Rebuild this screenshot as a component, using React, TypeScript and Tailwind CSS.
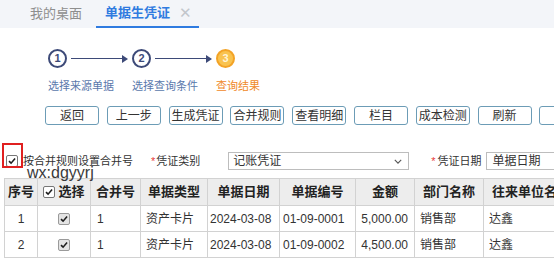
/*
 * 单据生凭证 — query result step with merge options and voucher list.
 */

const steps = [
  { n: "1", label: "选择来源单据" },
  { n: "2", label: "选择查询条件" },
  { n: "3", label: "查询结果" },
];

const buttons = ["返回", "上一步", "生成凭证", "合并规则", "查看明细", "栏目", "成本检测", "刷新", ""];

const rows = [
  { no: "1", merge: "1", type: "资产卡片", date: "2024-03-08", code: "01-09-0001", amount: "5,000.00", dept: "销售部", unit: "达鑫" },
  { no: "2", merge: "1", type: "资产卡片", date: "2024-03-08", code: "01-09-0002", amount: "4,500.00", dept: "销售部", unit: "达鑫" },
];

function Check({ gray }: { gray?: boolean }) {
  return (
    <span
      className={`inline-flex h-[12px] w-[12px] shrink-0 items-center justify-center rounded-[2px] border ${
        gray ? "border-[#9a9a9a] bg-[#e4e4e4]" : "border-[#777] bg-white"
      }`}
    >
      <svg viewBox="0 0 12 12" className="h-[10px] w-[10px]">
        <path d="M2.4 6.1 L4.9 8.6 L9.7 3.1" fill="none" stroke="#1e1e1e" strokeWidth="1.9" />
      </svg>
    </span>
  );
}

function Arrow() {
  return (
    <div className="mx-[4px] flex w-[57px] items-center">
      <div className="h-px flex-1 bg-[#3d4a78]" />
      <svg viewBox="0 0 6 8" className="h-[8px] w-[6px]">
        <path d="M0 0 L6 4 L0 8 Z" fill="#3d4a78" />
      </svg>
    </div>
  );
}

export default function App() {
  return (
    <div className="relative h-[258px] w-[554px] overflow-hidden bg-white font-['Liberation_Sans','Noto_Sans_CJK_SC',sans-serif]">
      {/* tab strip */}
      <div className="flex h-[28px] items-stretch bg-[#f3f5f9] pl-[30px]">
        <div className="flex items-center pb-[1px] text-[13px] text-[#8e8e8e]">我的桌面</div>
        <div className="ml-[14px] flex w-[103px] items-center border-b-[2px] border-[#2f7be0] pl-[9px] text-[13px] font-bold text-[#2f7be0]">
          单据生凭证
          <span className="ml-[9px] text-[15px] font-normal text-[#c2c6cc]">✕</span>
        </div>
      </div>

      {/* steps */}
      <div className="flex pl-[48px] pt-[21px]">
        {steps.map((s, i) => {
          const active = i === 2;
          return (
            <div key={s.n} className="flex flex-col">
              <div className="flex items-center">
                <div
                  className={`flex h-[19px] w-[19px] items-center justify-center rounded-full border-2 text-[11px] font-bold ${
                    active ? "border-[#f3a326] bg-[#f9c34f] text-[#fff3d6]" : "border-[#3d4a78] bg-white text-[#3d4a78]"
                  }`}
                >
                  {s.n}
                </div>
                {!active && <Arrow />}
              </div>
              <div className={`mt-[11px] text-[11px] leading-[14px] ${active ? "text-[#f0892a]" : "text-[#5a78ac]"}`}>
                {s.label}
              </div>
            </div>
          );
        })}
      </div>

      {/* toolbar */}
      <div className="mt-[13px] flex gap-[7.8px] pl-[45px]">
        {buttons.map((b, i) => (
          <div
            key={i}
            className="flex h-[19px] w-[54px] shrink-0 items-center justify-center rounded-[3px] border border-[#6c9cb6] bg-white text-[12px] text-[#333]"
          >
            {b}
          </div>
        ))}
      </div>

      {/* options */}
      <div className="mt-[27px] flex h-[18px] items-center whitespace-nowrap text-[11px] text-[#333] [&>*]:shrink-0">
        <div className="ml-[6px] flex">
          <Check />
        </div>
        <span className="ml-[5px]">按合并规则设置合并号</span>
        <span className="ml-[18px] text-[#e83b3b]">*</span>
        <span className="ml-[1px]">凭证类别</span>
        <div className="ml-[28px] flex h-[18px] w-[181px] items-center justify-between border border-[#bdbdbd] pl-[4px] pr-[6px] text-[12px]">
          <span>记账凭证</span>
          <svg viewBox="0 0 10 6" className="h-[5px] w-[8px]">
            <path d="M1 1 L5 5 L9 1" fill="none" stroke="#555" strokeWidth="1.4" />
          </svg>
        </div>
        <span className="ml-[22px] text-[#e83b3b]">*</span>
        <span className="ml-[2px]">凭证日期</span>
        <div className="ml-[4px] flex h-[18px] w-[90px] items-center border border-[#bdbdbd] pl-[6px] text-[12px]">
          单据日期
        </div>
      </div>

      {/* table */}
      <div className="ml-[4px] mt-[8px]">
        <table className="w-[600px] table-fixed border-collapse text-[12px] text-[#333]">
          <colgroup>
            <col className="w-[33px]" />
            <col className="w-[53px]" />
            <col className="w-[50px]" />
            <col className="w-[67px]" />
            <col className="w-[72px]" />
            <col className="w-[76px]" />
            <col className="w-[59px]" />
            <col className="w-[69px]" />
            <col className="w-[121px]" />
          </colgroup>
          <thead>
            <tr className="h-[27px] bg-[#ededed] text-[13px] font-bold text-[#222]">
              <th className="border border-[#d2d2d2]">序号</th>
              <th className="border border-[#d2d2d2]">
                <span className="inline-flex items-center gap-[3px]">
                  <Check />
                  选择
                </span>
              </th>
              <th className="border border-[#d2d2d2]">合并号</th>
              <th className="border border-[#d2d2d2]">单据类型</th>
              <th className="border border-[#d2d2d2]">单据日期</th>
              <th className="border border-[#d2d2d2]">单据编号</th>
              <th className="border border-[#d2d2d2]">金额</th>
              <th className="border border-[#d2d2d2]">部门名称</th>
              <th className="whitespace-nowrap border border-[#d2d2d2] pl-[8px] text-left">往来单位名称</th>
            </tr>
          </thead>
          <tbody>
            {rows.map((r) => (
              <tr key={r.no} className="h-[26px]">
                <td className="border border-[#d2d2d2] text-center">{r.no}</td>
                <td className="border border-[#d2d2d2] text-center">
                  <span className="inline-flex align-middle">
                    <Check gray />
                  </span>
                </td>
                <td className="border border-[#d2d2d2] pl-[6px]">{r.merge}</td>
                <td className="border border-[#d2d2d2] pl-[5px]">{r.type}</td>
                <td className="border border-[#d2d2d2] pl-[2px]">{r.date}</td>
                <td className="border border-[#d2d2d2] pl-[3px]">{r.code}</td>
                <td className="border border-[#d2d2d2] pr-[6px] text-right">{r.amount}</td>
                <td className="border border-[#d2d2d2] pl-[5px]">{r.dept}</td>
                <td className="border border-[#d2d2d2] pl-[5px]">{r.unit}</td>
              </tr>
            ))}
          </tbody>
        </table>
      </div>

      {/* red highlight round the merge checkbox */}
      <div className="absolute left-[2px] top-[143px] h-[25px] w-[21px] border-2 border-[#e02020]" />
      {/* watermark */}
      <div className="absolute left-[27px] top-[164px] text-[16px] leading-[18px] text-[#3a3a3a]">wx:dgyyrj</div>
    </div>
  );
}
